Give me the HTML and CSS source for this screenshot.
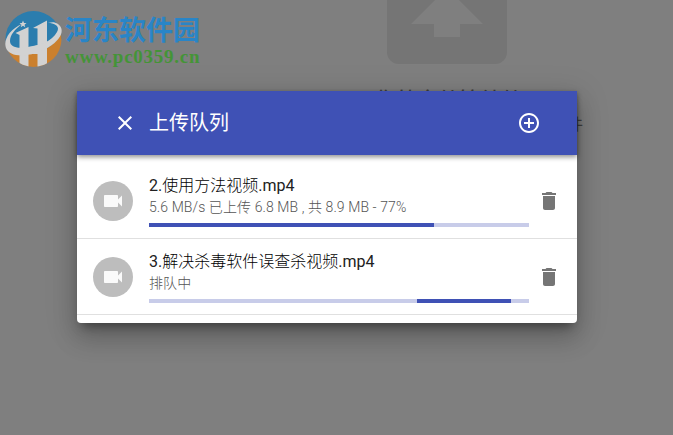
FILE: index.html
```html
<!DOCTYPE html>
<html lang="zh-CN">
<head>
<meta charset="utf-8">
<title>上传队列</title>
<link rel="stylesheet" href="styles.css">
</head>
<body>
<div class="backdrop">
  <svg class="upload-art" width="120" height="104" viewBox="0 -40 120 104"><rect y="-40" width="120" height="104" rx="12"/><path d="M60-12 96 24H73V37H47V24H24Z"/></svg>
  <p class="drop-title">您的文件等待件</p>
  <p class="drop-hint">件</p>
</div>
<section class="dialog">
  <header class="bar">
    <svg class="close" width="24" height="24" viewBox="0 0 24 24"><path d="M19 6.41 17.59 5 12 10.59 6.41 5 5 6.41 10.59 12 5 17.59 6.41 19 12 13.41 17.59 19 19 17.59 13.41 12z"/></svg>
    <h1>上传队列</h1>
    <svg class="add" width="24" height="24" viewBox="0 0 24 24"><path d="M13 7h-2v4H7v2h4v4h2v-4h4v-2h-4V7zm-1-5C6.48 2 2 6.48 2 12s4.48 10 10 10 10-4.48 10-10S17.52 2 12 2zm0 18c-4.41 0-8-3.59-8-8s3.590-8 8-8 8 3.590 8 8-3.590 8-8 8z"/></svg>
  </header>
  <ul class="queue">
    <li>
      <span class="avatar"><svg width="24" height="24" viewBox="0 0 24 24"><path d="M17 10.500V7c0-.55-.45-1-1-1H4c-.55 0-1 .45-1 1v10c0 .55.45 1 1 1h12c.55 0 1-.45 1-1v-3.500l4 4v-11l-4 4z"/></svg></span>
      <div class="info">
        <div class="name">2.<span class="cjk">使用方法视频</span>.mp4</div>
        <div class="status">5.6 MB/s 已上传 6.8 MB , 共 8.9 MB - 77%</div>
        <div class="track"><div class="fill"></div></div>
      </div>
      <svg class="trash" width="24" height="24" viewBox="0 0 24 24"><path d="M6 19c0 1.100.9 2 2 2h8c1.100 0 2-.9 2-2V7H6v12zM19 4h-3.500l-1-1h-5l-1 1H5v2h14V4z"/></svg>
    </li>
    <li>
      <span class="avatar"><svg width="24" height="24" viewBox="0 0 24 24"><path d="M17 10.500V7c0-.55-.45-1-1-1H4c-.55 0-1 .45-1 1v10c0 .55.45 1 1 1h12c.55 0 1-.45 1-1v-3.500l4 4v-11l-4 4z"/></svg></span>
      <div class="info">
        <div class="name">3.<span class="cjk">解决杀毒软件误查杀视频</span>.mp4</div>
        <div class="status">排队中</div>
        <div class="track"><div class="fill waiting"></div></div>
      </div>
      <svg class="trash" width="24" height="24" viewBox="0 0 24 24"><path d="M6 19c0 1.100.9 2 2 2h8c1.100 0 2-.9 2-2V7H6v12zM19 4h-3.500l-1-1h-5l-1 1H5v2h14V4z"/></svg>
    </li>
  </ul>
</section>
<div class="brand">
  <svg width="58" height="58" viewBox="0 0 58 58">
    <defs><clipPath id="disc"><circle cx="28.500" cy="28" r="28"/></clipPath></defs>
    <g clip-path="url(#disc)">
      <path fill="#2b7dae" d="M0 0h58v26Q48 40 28 42 8 43 0 34Z"/>
      <path fill="#cb802e" d="M0 36Q12 46 30 42T58 20v38H0Z"/>
      <path fill="#d2d2d2" d="M10.500 22 23.500 16V36l9-2V17.500L28 17 42 9.500V58H32.500V43h-9v15H14.500V24Z"/>
    </g>
    <path fill="#d2d2d2" d="M17 13C5 18-2 29 1 37c4 11 27 9 43-1 13-8 16-18 9-23-3-2-6-2-10-1 8 0 12 4 9 9-5 9-17 14-29 15-11 2-18 0-18-6 0-6 5-12 12-17Z"/>
    <path fill="#d2d2d2" d="m18 9.500 1 2.500h2.500l-2 1.700.8 2.500L18 14.800l-2.300 1.400.8-2.500-2-1.700H17Z"/>
  </svg>
  <div class="brand-words"><div class="brand-name">河东软件园</div><div class="brand-url">www.pc0359.cn</div></div>
</div>
</body>
</html>
```
FILE: styles.css
```css
* { box-sizing: border-box; }
body {
  margin: 0;
  width: 673px;
  height: 435px;
  overflow: hidden;
  position: relative;
  background: #7f7f7f;
  font-family: Roboto, "Noto Sans CJK SC", sans-serif;
  display: flex;
  justify-content: center;
  align-items: flex-start;
}
h1, p, ul { margin: 0; padding: 0; }
svg { display: block; fill: currentColor; flex: none; }
.backdrop { position: absolute; inset: 0; color: #404040; }
.upload-art { position: absolute; left: 387px; top: -40px; color: #757575; }
.upload-art path { fill: #7f7f7f; }
.drop-title { position: absolute; left: 374px; top: 87px; font-size: 24px; line-height: 30px; letter-spacing: -3px; white-space: nowrap; }
.drop-hint { position: absolute; left: 567px; top: 114px; font-size: 16px; line-height: 22px; }
.dialog {
  position: relative;
  width: 500px;
  height: 232px;
  margin: 91px 19px 0 0;
  background: #fff;
  border-radius: 0 0 4px 4px;
  box-shadow: 0 16px 24px 2px rgba(0,0,0,.14), 0 6px 30px 5px rgba(0,0,0,.12), 0 8px 10px -5px rgba(0,0,0,.4);
}
.bar {
  position: relative;
  display: flex;
  align-items: center;
  height: 64px;
  padding: 0 36px;
  background: #3f51b5;
  color: #fff;
  box-shadow: 0 2px 5px rgba(0,0,0,.45);
}
.bar h1 { flex: 1; margin-left: 12px; font-size: 20px; line-height: 28px; font-weight: 400; }
.queue { list-style: none; padding-top: 8px; }
.queue li {
  display: flex;
  align-items: flex-start;
  height: 76px;
  padding: 18px 16px 0;
  border-bottom: 1px solid #e0e0e0;
}
.avatar {
  display: grid;
  place-items: center;
  width: 40px;
  height: 40px;
  border-radius: 50%;
  background: #bdbdbd;
  color: #fafafa;
}
.info { width: 380px; margin: -6px 8px 0 16px; }
.name { height: 21px; font-size: 16px; line-height: 22px; color: #212121; white-space: nowrap; }
.cjk { font-weight: 300; color: #000; }
.status { height: 22px; margin-bottom: 5px; font-size: 14px; line-height: 22px; font-weight: 300; letter-spacing: .09px; color: #555; white-space: nowrap; }
.track { height: 4px; background: #c8cce9; }
.fill { width: 75%; height: 4px; background: #3f51b5; }
.fill.waiting { width: 94px; margin-left: 268px; }
.trash { margin-top: 8px; color: #757575; }
.brand { position: absolute; left: 5px; top: 11px; display: flex; }
.brand-words { margin-left: 2px; white-space: nowrap; }
.brand-name { height: 35px; font: 700 27px/35px "Noto Sans CJK SC", sans-serif; color: #2985c7; }
.brand-url { font: 700 19px/22px "Liberation Serif", serif; letter-spacing: .75px; color: #449437; }
```
